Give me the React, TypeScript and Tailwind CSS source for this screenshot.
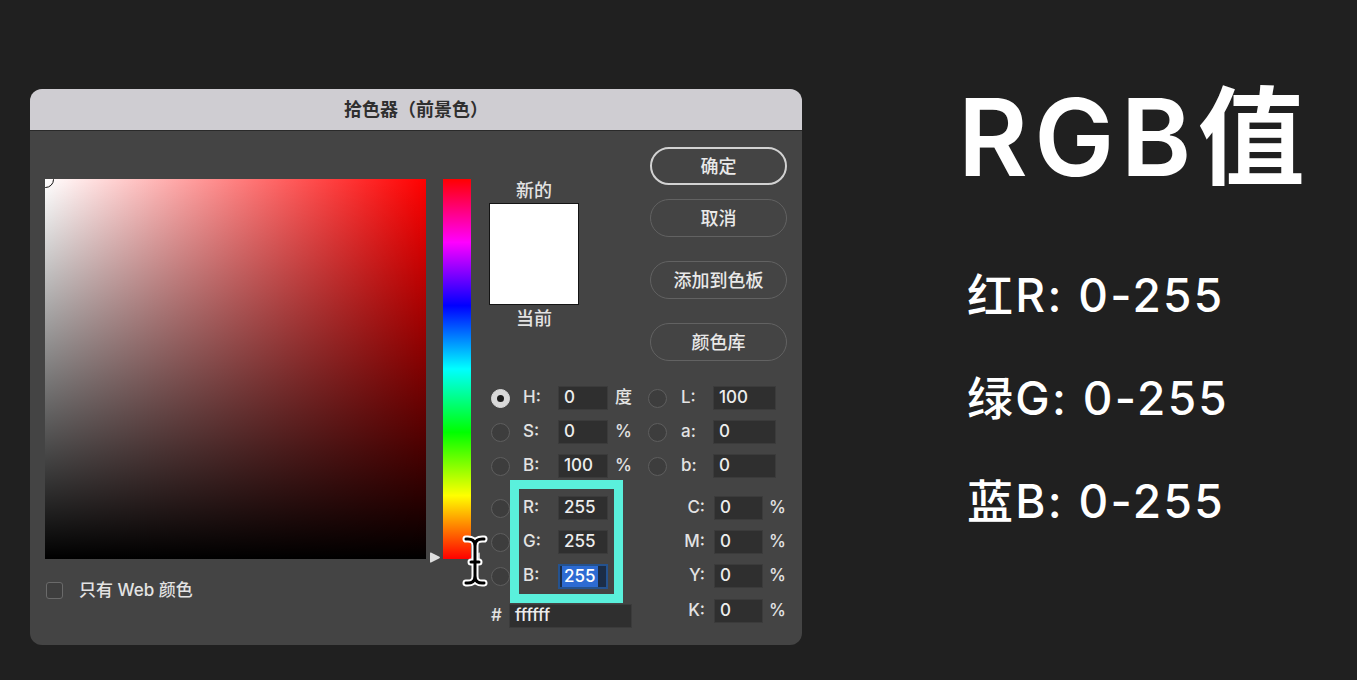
import React from 'react';

const sans = "font-['Inter','Noto_Sans_CJK_SC',sans-serif]";

function Radio({ on = false }: { on?: boolean }) {
  return (
    <div
      className={`w-[19px] h-[19px] shrink-0 rounded-full border flex items-center justify-center ${
        on ? 'bg-[#d9d9d9] border-[#d9d9d9]' : 'bg-[#3d3d3d] border-[#5e5e5e]'
      }`}
    >
      {on && <div className="w-[7px] h-[7px] rounded-full bg-[#1c1c1c]" />}
    </div>
  );
}

function Field({ value, w, className = '' }: { value: string; w: string; className?: string }) {
  return (
    <div className={`h-[24px] ${w} shrink-0 bg-[#2f2f2f] border border-[#3b3b3b] flex items-center pl-[5px] text-[#ededed] ${className}`}>
      {value}
    </div>
  );
}

function HsbRow({ l, lv, r, rv, unit, on }: { l: string; lv: string; r: string; rv: string; unit: string; on?: boolean }) {
  return (
    <div className="flex items-center h-[24px]">
      <div className="w-[159px] flex items-center pl-[2px]">
        <Radio on={on} />
        <span className="ml-[13px] w-[35px]">{l}</span>
        <Field value={lv} w="w-[50px]" />
        <span className="ml-[7px]">{unit}</span>
      </div>
      <div className="flex items-center">
        <Radio />
        <span className="ml-[14px] w-[32px]">{r}</span>
        <Field value={rv} w="w-[63px]" />
      </div>
    </div>
  );
}

function CmykPart({ l }: { l: string }) {
  return (
    <div className="flex items-center">
      <span className="w-[57px] text-right">{l}</span>
      <Field value="0" w="w-[49px]" className="ml-[9px]" />
      <span className="ml-[6px]">%</span>
    </div>
  );
}

function RgbRow({ l, c, active }: { l: string; c: string; active?: boolean }) {
  return (
    <div className="flex items-center h-[24px]">
      <div className="w-[159px] flex items-center pl-[2px]">
        <Radio />
        <span className="ml-[13px] w-[35px]">{l}</span>
        {active ? (
          <div className="h-[25px] w-[50px] bg-[#1b2d47] border-2 border-[#24528f] flex items-center pl-[2px]">
            <span className="bg-[#2d6bd2] text-white px-[2px] h-[21px] leading-[21px]">255</span>
          </div>
        ) : (
          <Field value="255" w="w-[50px]" />
        )}
      </div>
      <CmykPart l={c} />
    </div>
  );
}

function Button({ label, primary }: { label: string; primary?: boolean }) {
  return (
    <div
      className={`h-[38px] w-[137px] rounded-full flex items-center justify-center text-[18px] font-medium text-[#e9e9e9] ${
        primary ? 'border-2 border-[#d2d2d2]' : 'border-[1.5px] border-[#626262]'
      }`}
    >
      {label}
    </div>
  );
}

function IBeam() {
  return (
    <svg width="26" height="52" viewBox="0 0 26 52" fill="none">
      <g strokeLinecap="round" strokeLinejoin="round">
        <path d="M4 4 Q13 3 13 11 Q13 3 22 4 M13 11 L13 41 M4 48 Q13 49 13 41 Q13 49 22 48 M9 27 L17 27" stroke="#ffffff" strokeWidth="7" />
        <path d="M4 4 Q13 3 13 11 Q13 3 22 4 M13 11 L13 41 M4 48 Q13 49 13 41 Q13 49 22 48 M9 27 L17 27" stroke="#000000" strokeWidth="3" />
      </g>
    </svg>
  );
}

function ColorPicker() {
  return (
    <div className={`ml-[30px] mt-[89px] w-[772px] h-[556px] shrink-0 rounded-[12px] overflow-hidden bg-[#444444] flex flex-col ${sans}`}>
      <div className="h-[42px] shrink-0 bg-[#cfcdd2] border-b border-[#2a2a2a] flex items-center justify-center text-[18px] font-bold text-[#2f2f2f]">
        拾色器（前景色）
      </div>

      <div className="flex pl-[15px] pt-[16px] text-[17px] font-medium text-[#e3e3e3]">
        {/* left: field + hue */}
        <div className="mt-[32px] flex flex-col">
          <div className="flex gap-[17px]">
            <div className="relative w-[381px] h-[380px] overflow-hidden bg-[linear-gradient(to_right,#ffffff,#ff0000)]">
              <div className="absolute inset-0 bg-[linear-gradient(to_bottom,rgba(0,0,0,0),#000000)]" />
              <div className="absolute -left-[8px] -top-[8px] w-[17px] h-[17px] rounded-full border-[1.5px] border-[#111]" />
            </div>
            <div className="relative w-[28px] h-[380px] bg-[linear-gradient(to_bottom,#ff0000_0%,#ff00ff_16.67%,#0000ff_33.33%,#00ffff_50%,#00ff00_66.67%,#ffff00_83.33%,#ff0000_100%)]">
              <svg className="absolute -left-[14px] top-[372px]" width="12" height="13" viewBox="0 0 12 13">
                <path d="M2 1.5 Q1 1 1 2.5 L1 10.5 Q1 12 2 11.5 L10.5 7.3 Q11.5 6.5 10.5 5.7 Z" fill="#dedede" />
              </svg>
              <svg className="absolute -right-[10px] top-[372px]" width="10" height="13" viewBox="0 0 10 13">
                <path d="M8 1.5 Q9 1 9 2.5 L9 10.5 Q9 12 8 11.5 L1 7.3 Q0 6.5 1 5.7 Z" fill="#bdbdbd" />
              </svg>
              <div className="absolute left-[19px] top-[356px]">
                <IBeam />
              </div>
            </div>
          </div>
          <div className="mt-[19px] flex items-center pl-[1px]">
            <div className="w-[17px] h-[17px] rounded-[3px] border border-[#6a6a6a] bg-[#3e3e3e]" />
            <span className="ml-[16px]">只有 Web 颜色</span>
          </div>
        </div>

        {/* right area */}
        <div className="relative ml-[18px] w-[298px] flex flex-col">
          <div className="flex">
            <div className="mt-[32px] w-[90px] flex flex-col items-center text-[18px] font-medium">
              <div className="h-[24px] leading-[24px]">新的</div>
              <div className="w-[90px] h-[102px] bg-white border border-[#141414]" />
              <div className="h-[28px] leading-[28px]">当前</div>
            </div>
            <div className="ml-auto flex flex-col w-[137px]">
              <Button label="确定" primary />
              <div className="mt-[14px]"><Button label="取消" /></div>
              <div className="mt-[24px]"><Button label="添加到色板" /></div>
              <div className="mt-[24px]"><Button label="颜色库" /></div>
            </div>
          </div>

          <div className="mt-[25px] flex flex-col gap-[10px]">
            <HsbRow l="H:" lv="0" unit="度" r="L:" rv="100" on />
            <HsbRow l="S:" lv="0" unit="%" r="a:" rv="0" />
            <HsbRow l="B:" lv="100" unit="%" r="b:" rv="0" />
            <div className="mt-[8px]">
              <RgbRow l="R:" c="C:" />
            </div>
            <RgbRow l="G:" c="M:" />
            <RgbRow l="B:" c="Y:" active />
            <div className="flex items-start">
              <div className="w-[159px] flex items-center mt-[5px]">
                <span className="w-[20px] pl-[2px]">#</span>
                <Field value="ffffff" w="w-[123px]" />
              </div>
              <CmykPart l="K:" />
            </div>
          </div>

          <div className="absolute left-[21px] top-[333px] w-[113px] h-[123px] border-[9px] border-[#5af0dc]" />
        </div>
      </div>
    </div>
  );
}

export default function App() {
  return (
    <div className={`w-[1357px] h-[680px] bg-[#202020] flex overflow-hidden ${sans}`}>
      <ColorPicker />
      <div className="ml-[156px] mt-[84px] flex flex-col text-white">
        <div className="text-[107px] font-semibold leading-none tracking-[0.06em] whitespace-nowrap">RGB值</div>
        <div className="ml-[9px] mt-[81px] flex flex-col gap-[57px] text-[46px] font-medium leading-none tracking-[0.05em] whitespace-nowrap">
          <div>红R: 0-255</div>
          <div>绿G: 0-255</div>
          <div>蓝B: 0-255</div>
        </div>
      </div>
    </div>
  );
}
